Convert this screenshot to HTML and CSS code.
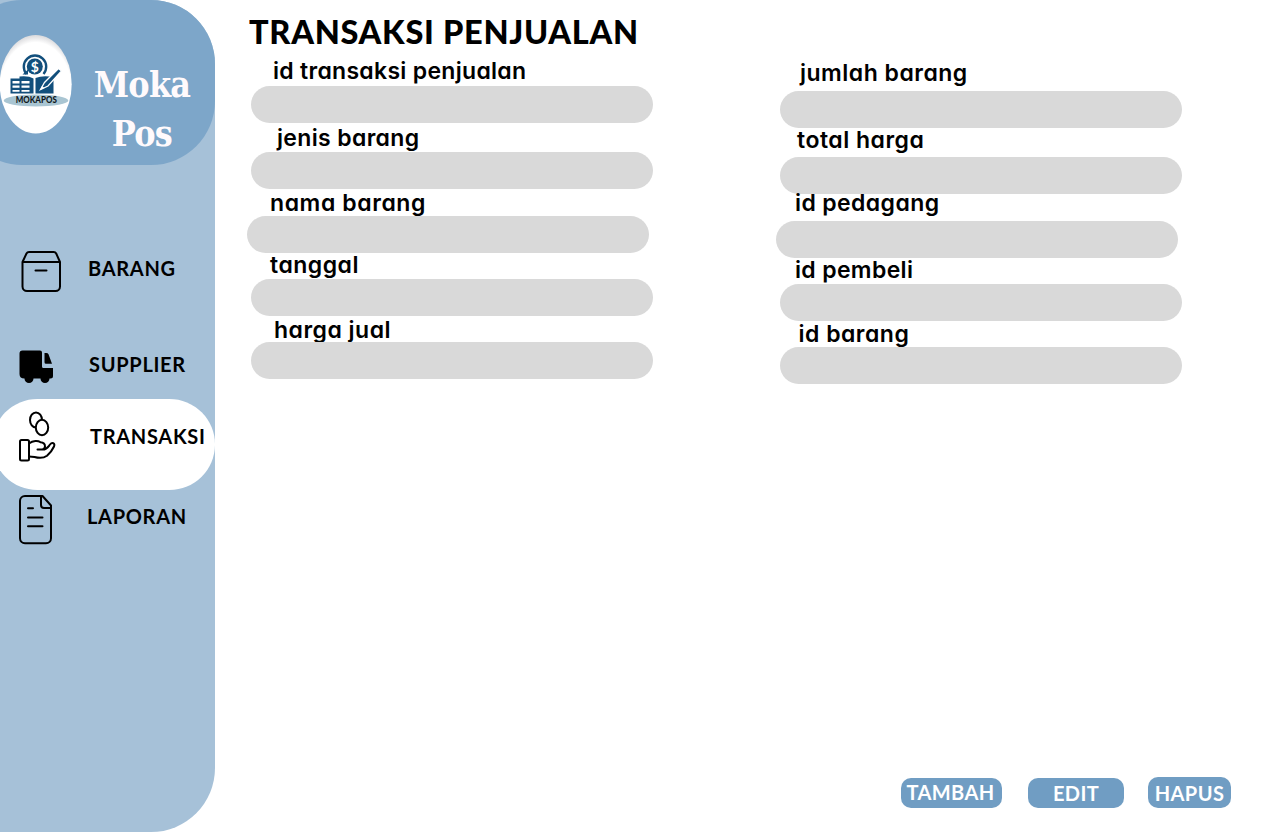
FILE: index.html
```html
<!DOCTYPE html>
<html lang="id">
<head>
<meta charset="utf-8">
<title>Moka Pos</title>
<link rel="stylesheet" href="styles.css">
</head>
<body>
<div class="app">
  <aside class="sidebar">
    <header class="brand">
      <svg class="logo" width="72" height="99" viewBox="0 0 72 99">
        <defs>
          <radialGradient id="rim" cx="50%" cy="58%" r="60%">
            <stop offset=".84" stop-color="#fff"/>
            <stop offset="1" stop-color="#cfcfd2"/>
          </radialGradient>
        </defs>
        <ellipse cx="35.700" cy="49.200" rx="36" ry="49.200" fill="url(#rim)"/>
        <ellipse cx="36" cy="65.500" rx="32.300" ry="6" fill="#a9c5d2"/>
        <path d="M26.500 39A11.200 11.200 0 1 1 43.500 39" fill="none" stroke="#124f7c" stroke-width="2.400"/>
        <path d="M22.500 39.500h5.500v-5z" fill="#124f7c"/>
        <circle cx="34.800" cy="31.500" r="8" fill="#124f7c"/>
        <text class="coin" x="34.800" y="36.500" text-anchor="middle">$</text>
        <path d="M10.500 43.500h9v-2q9-1 14 2v15H10.500z M35.500 43q7-3 18-1v16.500H35.500z" fill="#124f7c"/>
        <path d="M12.500 46h7v2.500h-7zM21.500 46h8v2.500h-8zM12.500 50.500h7v2.300h-7zM21.500 50.500h8v2.300h-8zM12.500 55h7v1.800h-7zM21.500 55h8v1.800h-8z" fill="#fff"/>
        <path d="M40.500 54.500l4-7L58.500 33.500l3 2.500L48 51z" fill="#124f7c" stroke="#fff" stroke-width="1.300"/>
        <path d="M40 55l2-4 2.500 2z" fill="#fff"/>
        <text class="logo-name" x="36.300" y="68.300" text-anchor="middle" textLength="41" lengthAdjust="spacingAndGlyphs">MOKAPOS</text>
      </svg>
      <div class="brand-name">Moka<br>Pos</div>
    </header>
    <nav class="menu">
      <a class="item item-barang">
        <svg class="icon" width="44" height="46" viewBox="0 0 44 46"><path d="M4.500 13v24.500a4.500 4.500 0 0 0 4.500 4.500h28.500a4.500 4.500 0 0 0 4.500-4.500V13L38.200 4.500Q37.400 3 35.700 3H11Q9.300 3 8.500 4.500zM4.500 13H42M17.500 21.500H28.500"/></svg>
        <span>BARANG</span>
      </a>
      <a class="item item-supplier">
        <svg class="icon solid" width="44" height="36" viewBox="0 0 44 36"><path d="M4.500 1.500h17.500q2 0 2 2v14q0 1.500 1.500 1.500H35v8q0 2.500-2.500 2.500H31.500a4.500 4.500 0 0 1-9 0H15.500a4.500 4.500 0 0 1-9 0Q1.500 29.500 1.500 25V4.500q0-3 3-3zM26.500 4h1.800q1.500 0 2.200 1.200L34 14.800H28q-1.500 0-1.500-1.500z"/></svg>
        <span>SUPPLIER</span>
      </a>
      <a class="item item-transaksi">
        <svg class="icon" width="44" height="56" viewBox="0 0 44 56"><ellipse cx="18" cy="11" rx="6" ry="7.500"/><ellipse class="cover" cx="24" cy="18.500" rx="6.200" ry="7.700"/><rect x="2" y="31" width="9" height="20.500" rx="1.500"/><path d="M11 34.500C15 31.500 20 31.500 22.500 33.300Q27 33.500 27 37.500 26.500 40.500 24 40.500H19.500M24 40.500C29 41 30 38 32 35.500 34 33 37.500 34 36 37.500 34 42 31.500 44.500 29 46.700 25.500 49.300 20 49 16.500 48Q13.500 47.500 11 47.500"/></svg>
        <span>TRANSAKSI</span>
      </a>
      <a class="item item-laporan">
        <svg class="icon" width="44" height="52" viewBox="0 0 44 52"><path d="M7 2H24.500l8.500 9.500V44.300a5 5 0 0 1-5 5H7a5 5 0 0 1-5-5V7a5 5 0 0 1 5-5zM23 2v9q0 3 3 3H33M10 14.300h5M10 23.500h14.500M10 32.300h14.500"/></svg>
        <span>LAPORAN</span>
      </a>
    </nav>
  </aside>

  <main class="content">
    <h1>TRANSAKSI PENJUALAN</h1>
    <form class="form">
      <div class="column">
        <div class="field f-id"><label>id transaksi penjualan</label><div class="input"></div></div>
        <div class="field f-jenis"><label>jenis barang</label><div class="input"></div></div>
        <div class="field f-nama"><label>nama barang</label><div class="input"></div></div>
        <div class="field f-tanggal"><label>tanggal</label><div class="input"></div></div>
        <div class="field f-harga"><label>harga jual</label><div class="input"></div></div>
      </div>
      <div class="column">
        <div class="field f-jumlah"><label>jumlah barang</label><div class="input"></div></div>
        <div class="field f-total"><label>total harga</label><div class="input"></div></div>
        <div class="field f-pedagang"><label>id pedagang</label><div class="input"></div></div>
        <div class="field f-pembeli"><label>id pembeli</label><div class="input"></div></div>
        <div class="field f-barang"><label>id barang</label><div class="input"></div></div>
      </div>
    </form>
    <footer class="actions">
      <button class="btn tambah">TAMBAH</button>
      <button class="btn edit">EDIT</button>
      <button class="btn hapus">HAPUS</button>
    </footer>
  </main>
</div>
</body>
</html>
```
FILE: styles.css
```css
* { box-sizing: border-box; }
body {
  margin: 0;
  background: #fff;
  color: #000;
  font-family: Lato, "Open Sans", sans-serif;
}
.app { display: flex; width: 1280px; height: 832px; overflow: hidden; }

.sidebar {
  flex: none;
  width: 275px;
  margin-left: -60px;
  height: 832px;
  background: #a6c1d8;
  border-radius: 0 64px 64px 64px;
}
.brand {
  display: flex;
  align-items: flex-start;
  margin-left: 18px;
  height: 165px;
  padding-left: 42px;
  background: #7da6c9;
  border-radius: 64px;
}
.logo { flex: none; margin-top: 34.600px; }
.coin { font: 700 14px Lato, sans-serif; fill: #fff; }
.logo-name { font: 900 9.500px Lato, sans-serif; fill: #101820; }
.brand-name {
  width: 140px;
  padding-top: 60px;
  font: 700 35.500px/49px "DejaVu Serif Condensed", "DejaVu Serif", serif;
  letter-spacing: -.7px;
  text-align: center;
  color: #fffafc;
}
.menu { padding-left: 60px; }
.item {
  display: flex;
  align-items: flex-start;
  font-size: 20px;
  line-height: 24px;
  font-weight: 700;
  letter-spacing: .7px;
}
.item span { white-space: nowrap; }
.icon { flex: none; margin-left: 18px; fill: none; stroke: #000; stroke-width: 2; stroke-linecap: round; stroke-linejoin: round; }
.solid { fill: #000; stroke: none; }
.cover { fill: #fff; }
.item-barang { height: 100px; margin-top: 84px; }
.item-barang span { margin: 7px 0 0 26px; }
.item-supplier { height: 50px; }
.item-supplier span { margin: 3px 0 0 27px; }
.item-transaksi {
  height: 91px;
  margin-left: -8px;
  padding: 10px 0 0 8px;
  background: #fff;
  border-radius: 45.500px;
}
.item-transaksi span { margin: 15px 0 0 28px; }
.item-laporan { padding-top: 4px; }
.item-laporan span { margin: 10px 0 0 25px; }

.content { flex: 1; display: flex; flex-direction: column; }
h1 {
  margin: 0 0 0 34px;
  height: 57px;
  padding-top: 12px;
  font-size: 32.500px;
  line-height: 39px;
  font-weight: 900;
  letter-spacing: .7px;
  white-space: nowrap;
}
.form { display: flex; gap: 127px; padding-left: 36px; }
.column { width: 402px; }
label {
  position: relative;
  display: block;
  font-family: Inter, sans-serif;
  font-feature-settings: "cv11" 1;
  font-size: 23px;
  font-weight: 600;
  letter-spacing: .5px;
  white-space: nowrap;
}
.input { position: relative; width: 402px; height: 37px; background: #d9d9d9; border-radius: 18.500px; }
.f-id label { height: 29px; line-height: 29px; padding-left: 22px; letter-spacing: .3px; }
.f-jenis label { height: 29px; line-height: 31px; padding-left: 26px; letter-spacing: .35px; }
.f-nama label { height: 27px; line-height: 29px; padding-left: 19px; letter-spacing: .6px; }
.f-tanggal label { height: 26px; line-height: 25px; padding-left: 19px; }
.f-harga label { height: 26px; line-height: 29px; padding-left: 23px; }
.f-jumlah label { height: 34px; line-height: 33px; padding-left: 20px; }
.f-total label { height: 29px; line-height: 25px; padding-left: 17px; }
.f-pedagang label { height: 27px; line-height: 19px; padding-left: 15px; letter-spacing: .4px; }
.f-pembeli label { height: 26px; line-height: 25px; padding-left: 15px; letter-spacing: .35px; }
.f-barang label { height: 26px; line-height: 27px; padding-left: 18.500px; }
.f-nama .input, .f-pedagang .input { margin-left: -4px; }

.actions { display: flex; align-items: flex-end; margin-top: auto; padding: 0 0 24px 686px; }
.btn {
  flex: none;
  height: 30px;
  padding: 0;
  border: 0;
  border-radius: 10px;
  background: #709dc3;
  color: #fff;
  font: 700 20px/30px Lato, sans-serif;
  letter-spacing: .4px;
}
.tambah { width: 101px; padding: 0 2px 0 0; line-height: 28px; padding-bottom: 3px; }
.edit { width: 96px; margin-left: 26px; }
.hapus { width: 83px; height: 31px; margin-left: 24px; }
```
